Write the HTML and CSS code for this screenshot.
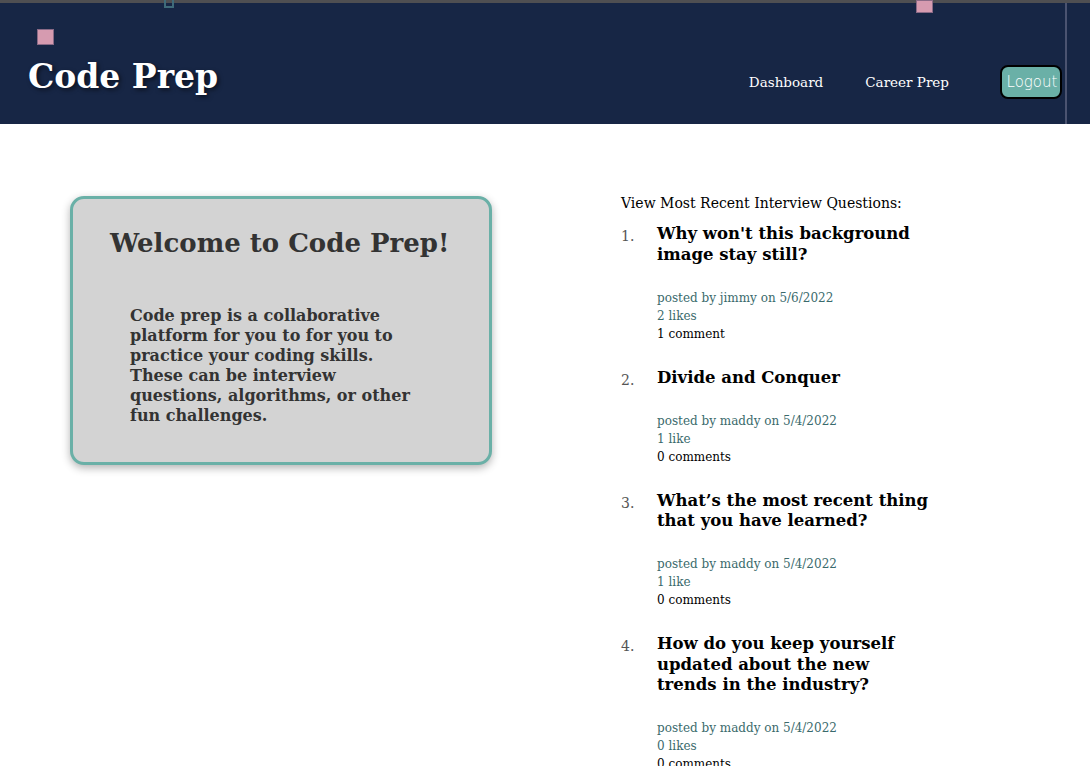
FILE: index.html
```html
<!DOCTYPE html>
<html>
<head>
<meta charset="utf-8">
<title>Code Prep</title>
<link rel="stylesheet" href="styles.css">
</head>
<body>
<header class="topbar">
  <div class="topbar-inner">
    <span class="deco deco-a"></span>
    <span class="deco deco-b"></span>
    <span class="deco deco-c"></span>
    <h1 class="logo">Code Prep</h1>
    <nav class="nav">
      <a class="nav-link" href="#">Dashboard</a>
      <a class="nav-link" href="#">Career Prep</a>
      <button class="logout">Logout</button>
    </nav>
  </div>
</header>
<main class="main">
  <section class="welcome">
    <h2 class="welcome-title">Welcome to Code Prep!</h2>
    <p class="welcome-text">Code prep is a collaborative platform for you to for you to practice your coding skills. These can be interview questions, algorithms, or other fun challenges.</p>
  </section>
  <section class="recent">
    <p class="recent-label">View Most Recent Interview Questions:</p>
    <ol class="questions">
      <li class="question">
        <h3 class="q-title">Why won't this background image stay still?</h3>
        <p class="q-meta">posted by jimmy on 5/6/2022</p>
        <p class="q-meta">2 likes</p>
        <p class="q-comments">1 comment</p>
      </li>
      <li class="question">
        <h3 class="q-title">Divide and Conquer</h3>
        <p class="q-meta">posted by maddy on 5/4/2022</p>
        <p class="q-meta">1 like</p>
        <p class="q-comments">0 comments</p>
      </li>
      <li class="question">
        <h3 class="q-title">What’s the most recent thing that you have learned?</h3>
        <p class="q-meta">posted by maddy on 5/4/2022</p>
        <p class="q-meta">1 like</p>
        <p class="q-comments">0 comments</p>
      </li>
      <li class="question">
        <h3 class="q-title">How do you keep yourself updated about the new trends in the industry?</h3>
        <p class="q-meta">posted by maddy on 5/4/2022</p>
        <p class="q-meta">0 likes</p>
        <p class="q-comments">0 comments</p>
      </li>
    </ol>
  </section>
</main>
</body>
</html>
```
FILE: styles.css
```css
* { box-sizing: border-box; }
html, body { margin: 0; padding: 0; background: #ffffff; }
body { font-family: "DejaVu Serif", serif; color: #000; overflow: hidden; height: 766px; }

.topbar {
  background: #172645;
  border-top: 3px solid #4f4f52;
  height: 124px;
}
.topbar-inner {
  position: relative;
  width: 1067px;
  height: 121px;
  border-right: 2px solid #4b5370;
  display: flex;
  align-items: flex-start;
  justify-content: space-between;
}
.deco { position: absolute; display: block; }
.deco-a { left: 37px; top: 26px; width: 17px; height: 16px; background: #d69bb0; border: 1px solid #8a6a86; }
.deco-b { left: 916px; top: -3px; width: 17px; height: 13px; background: #d69bb0; border: 1px solid #8a6a86; }
.deco-c { left: 164px; top: -3px; width: 10px; height: 8px; border: 2px solid #3f6b7a; border-top: none; }

.logo {
  margin: 54px 0 0 28px;
  font-family: "DejaVu Serif", serif;
  font-weight: bold;
  font-size: 33px;
  line-height: 40px;
  color: #ffffff;
  text-shadow: 2px 2px 4px rgba(0,0,0,0.55);
}
.nav {
  display: flex;
  align-items: center;
  margin-top: 62px;
  margin-right: 3px;
}
.nav-link {
  font-family: "DejaVu Serif", serif;
  font-size: 13.5px;
  color: #ffffff;
  text-decoration: none;
  margin-right: 42px;
}
.nav-link + .nav-link { margin-right: 51px; }
.logout {
  font-family: "DejaVu Sans", sans-serif;
  font-weight: 300;
  font-size: 15px;
  color: #ffffff;
  background: #6ab0a7;
  border: 2px solid #000;
  border-radius: 8px;
  padding: 5px 2px 6px 4px;
  width: 62px;
  height: 34px;
}

.main {
  display: flex;
  align-items: flex-start;
  padding: 72px 0 0 70px;
}
.welcome {
  width: 422px;
  height: 269px;
  background: #d3d3d3;
  border: 3px solid #6ab0a7;
  border-radius: 14px;
  box-shadow: 0 3px 8px rgba(0,0,0,0.3);
  padding: 24px 67px 0 57px;
  color: #333333;
}
.welcome-title {
  margin: 0 -26px 0 -20px;
  text-align: center;
  white-space: nowrap;
  font-family: "DejaVu Serif", serif;
  font-weight: bold;
  font-size: 26px;
  line-height: 40px;
}
.welcome-text {
  margin: 43px 0 0 0;
  font-family: "DejaVu Serif", serif;
  font-weight: bold;
  font-size: 16px;
  line-height: 20px;
}

.recent {
  margin-left: 129px;
  width: 330px;
}
.recent-label {
  margin: -2px 0 0 0;
  font-family: "DejaVu Serif", serif;
  font-size: 14px;
  line-height: 18px;
}
.questions {
  margin: 12px 0 0 0;
  padding: 0;
  width: 309px;
  list-style: none;
  counter-reset: q;
}
.question {
  counter-increment: q;
  display: grid;
  grid-template-columns: 36px 1fr;
  margin: 0 0 25px 0;
}
.question::before {
  content: counter(q) ".";
  grid-column: 1;
  grid-row: 1;
  font-family: "DejaVu Serif", serif;
  font-size: 14px;
  line-height: 20.5px;
  color: #555;
  padding-top: 2px;
}
.question > * { grid-column: 2; }
.q-title {
  grid-row: 1;
  margin: 0 0 23.5px 0;
  font-family: "DejaVu Serif", serif;
  font-weight: bold;
  font-size: 16.5px;
  line-height: 20.5px;
  color: #000;
}
.q-meta, .q-comments {
  margin: 0;
  font-family: "DejaVu Serif", serif;
  font-size: 12px;
  line-height: 18px;
}
.q-meta { color: #3a6a6c; }
.q-comments { color: #000; }
```
